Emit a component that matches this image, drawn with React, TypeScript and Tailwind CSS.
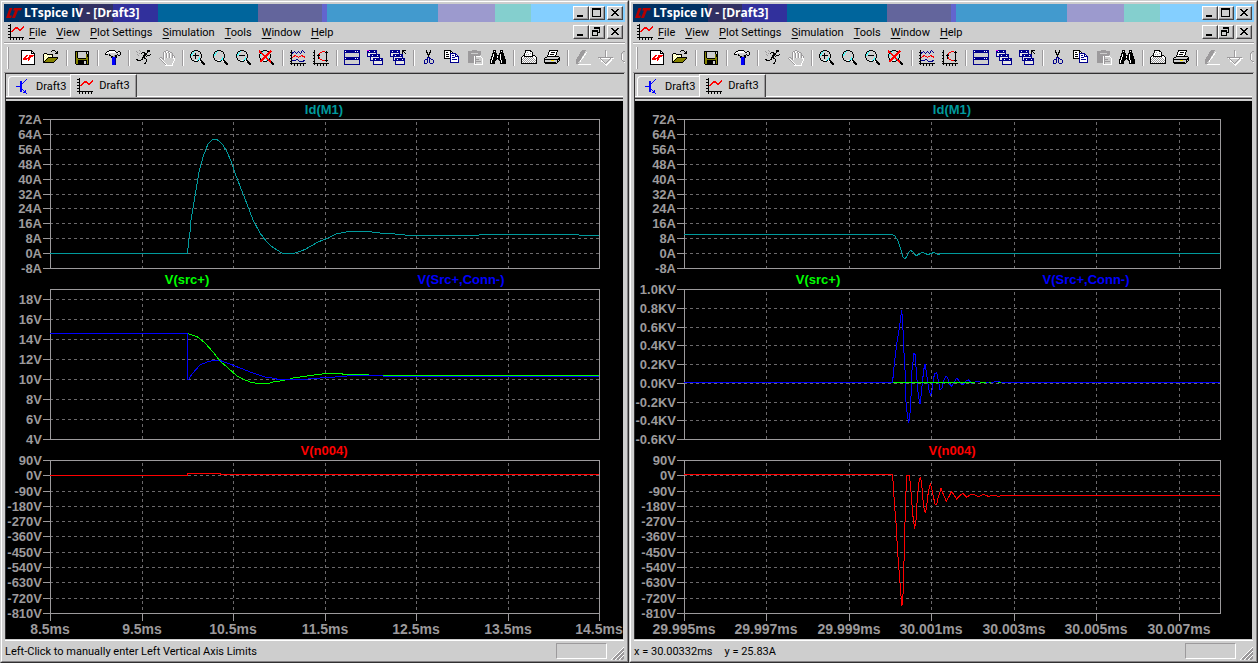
import type { ReactNode } from "react";

const UI = "font-['Roboto','Open_Sans',sans-serif]";

const AXIS = "#9c9a9c";
const GRID = "#6b696b";

/* ---------- icons ---------- */

function Icon({ children }: { children: ReactNode }) {
  return (
    <svg
      viewBox="0 0 16 16"
      className="block size-4 shrink-0"
      fill="none"
      stroke="#000"
      shapeRendering="crispEdges"
      aria-hidden="true"
    >
      {children}
    </svg>
  );
}

/* Draws a small glyph from character rows; each letter indexes a colour. */
const INK: Record<string, string> = {
  k: "#000000",
  w: "#ffffff",
  g: "#9c9a9c",
  s: "#cecece",
  b: "#0000ff",
  n: "#00008c",
  r: "#ff0000",
  o: "#848200",
  y: "#ffff9c",
  c: "#42ffff",
};

function Bitmap({ rows }: { rows: string[] }) {
  return (
    <Icon>
      <g stroke="none">
        {rows.flatMap((row, y) =>
          Array.from(row.matchAll(/([a-z])\1*/g)).map((run) => (
            <rect key={`${run.index}-${y}`} x={run.index} y={y} width={run[0].length} height="1" fill={INK[run[1]]} />
          )),
        )}
      </g>
    </Icon>
  );
}

const PlotIcon = () => (
  <Bitmap
    rows={[
      "..k.............",
      "kkk.............",
      "..k............r",
      "..k....rrr....rr",
      "kkk...rrrrr..rr.",
      "..k..rr...rrrr..",
      "..k.rr.....rr...",
      "kkkrr...........",
      "..k.............",
      "..k.............",
      "kkk.............",
      "..k.............",
      "..k.............",
      "kkkkkkkkkkkkkkkk",
      "..k..k..k..k..k.",
      "..k..k..k..k..k.",
    ]}
  />
);

const TransistorIcon = () => (
  <Bitmap
    rows={[
      "..........b.....",
      ".........b......",
      "....bb..b.......",
      "....bb.b........",
      "....bbb.........",
      "....bb..........",
      "....bb..........",
      "bbbbbb..........",
      "....bb..........",
      "....bb..........",
      "....bbb.........",
      "....bb.b.b......",
      "....bb..bb......",
      ".......bbb......",
      "..........b.....",
      "................",
    ]}
  />
);

const NewIcon = () => (
  <Bitmap
    rows={[
      ".kkkkkkkkkkk....",
      ".kwwwwwwwwwkk...",
      ".kwwwwwwwwwkwk..",
      ".kwwwwwwwwwkkkk.",
      ".kwwwwwwwwwwwwk.",
      ".kwwwwrrwrrrrrk.",
      ".kwwwrrwwrrrrwk.",
      ".kwwrrwwrrrwwwk.",
      ".kwrrrrrrrwwwwk.",
      ".kwrrrrwrrwwwwk.",
      ".kwwwwwwrwwwwwk.",
      ".kwwwwwwwwwwwwk.",
      ".kwwwwwwwwwwwwk.",
      ".kwwwwwwwwwwwwk.",
      ".kkkkkkkkkkkkkk.",
    ]}
  />
);

const OpenIcon = () => (
  <Bitmap
    rows={[
      ".........kkk....",
      "........k...k.k.",
      ".............kk.",
      ".kkk........kkk.",
      "kywykkkkkk......",
      "kwywywywyk......",
      "kywywywywk......",
      "kwywykkkkkkkkkk.",
      "kywykoooooooook.",
      "kwykoooooooook..",
      "kykoooooooook...",
      "kkoooooooook....",
      "kkkkkkkkkkk.....",
    ]}
  />
);

const SaveIcon = () => (
  <Bitmap
    rows={[
      "................",
      ".kkkkkkkkkkkkkk.",
      ".kokssssssssksk.",
      ".kokssssssssk.k.",
      ".kokssssssssokk.",
      ".kokssssssssokk.",
      ".kokssssssssokk.",
      ".kokssssssssook.",
      ".kookkkkkkkkook.",
      ".kooooooooooook.",
      ".kookkkkkkkkkok.",
      ".kookkkkkksskok.",
      ".kookkkkkksskok.",
      ".kookkkkkksskok.",
      "..kkkkkkkkkkkkk.",
    ]}
  />
);

const HammerIcon = () => (
  <Bitmap
    rows={[
      "....kkkkkk......",
      "..kkwwwwwwk..kk.",
      ".kwwwwwwwwwkkwsk",
      "kwwssssssssssssk",
      "kkk.kssssssskssk",
      "....kksssgkk.kk.",
      "......kkggkk....",
      "......kbbbnk....",
      ".......bbbn.....",
      ".......bbbn.....",
      ".......bbbn.....",
      ".......bbbn.....",
      ".......bbbn.....",
      ".......bbbn.....",
      ".......bbbn.....",
    ]}
  />
);

const RunIcon = () => (
  <Bitmap
    rows={[
      "...g.......kkk..",
      "g...g......kkk..",
      ".g....kkk..k....",
      "...g.k..kkk.....",
      ".g......kkk...k.",
      "..g....kkk.kkk..",
      ".......kk.k.....",
      "......kkk.......",
      "......k.kk......",
      "kk...kk...k.....",
      ".kkkk.....k.....",
      "..........k.....",
      ".........k......",
      "........kk......",
    ]}
  />
);

const HandIcon = () => (
  <Bitmap
    rows={[
      ".......gg.......",
      ".....ggwwgg.....",
      "....gwgwsgwgg...",
      "....gwsgwsgwsg..",
      "....gwsgwsgwsg..",
      "....gwsgwsgwsgg.",
      "....gwsgwsgwsgwg",
      ".gg.gwsgwsgwsgwg",
      "gwsggwssssssssww",
      ".gwsgwsssssssssw",
      "..gwsssssssssssw",
      "...gwsssssssssw.",
      "....gwssssssssw.",
      ".....gwssssssw..",
      "......gwsssssw..",
      "......wwwwwwww..",
    ]}
  />
);

function Lens({ children }: { children?: ReactNode }) {
  return (
    <Icon>
      <path d="M4 .5H8M2 1.5H4M8 1.5H10M1.5 2V4M10.5 2V4M.5 4V8M11.5 4V8M1.5 8V10M10.5 8V9M2 10.5H4M8 10.5H9M4 11.5H8" />
      <path stroke="#42ffff" d="M4 1.5H5M3 2.5H4M2.5 3V5M1.5 4V6M7 10.5H8M8 9.5H10M9.5 7V9" />
      <path strokeWidth="2" d="M10 10L15 15" />
      <path stroke="#fff" d="M9 10.5H10M10 11.5H11M5 10.5H7" />
      {children}
    </Icon>
  );
}

const ZoomInIcon = () => (
  <Lens>
    <path d="M3 5.5h6M5.5 3v6" />
  </Lens>
);
const ZoomAreaIcon = () => <Lens />;
const ZoomOutIcon = () => (
  <Lens>
    <path d="M3 5.5h6" />
  </Lens>
);
const ZoomFitIcon = () => (
  <Lens>
    <path stroke="#f00" strokeWidth="1.6" d="M0 1L12 12M12 1L1 12" />
  </Lens>
);

const TracesIcon = () => (
  <Icon>
    <path d="M1.5 0v15M0 2.5h2M0 5.5h2M0 8.5h2M0 11.5h2M0 13.5h16M4.5 13v3M7.5 13v3M10.5 13v3M13.5 13v3" />
    <path stroke="#00008c" d="M2 3.5L4.5 1.5L6.5 3.5L8.5 1.5L10.5 3.5L12.5 .5L15.5 3.5" />
    <path stroke="#f00" d="M2 7.5L5.5 5.5L8.5 7.5L11.5 5.5L15.5 7.5" />
    <path stroke="#00008c" d="M2 10.5H5L7 9.5L10 11.5H13L15.5 9.5" />
  </Icon>
);

const AutoRangeIcon = () => (
  <Icon>
    <path d="M1.5 0v15M0 2.5h2M0 5.5h2M0 8.5h2M0 11.5h2M0 13.5h16M4.5 13v3M7.5 13v3M10.5 13v3M13.5 13v3M13.5 1v11M12 2.5h3M12 10.5h3M5.5 4v5M4 5.5h3" />
    <path stroke="#f00" d="M6.5 5V3M7 2.5H9M9 1.5H12M6.5 7V9M7 9.5H9M9 10.5H12" />
  </Icon>
);

const TileIcon = () => (
  <Icon>
    <path stroke="none" fill="#00008c" d="M0 0h16v15H0z" />
    <path stroke="none" fill="#cecece" d="M1 3h14v4H1zM1 10h14v4H1z" />
    <path stroke="#fff" d="M1 1.5h1M11 1.5h1M13 1.5h1M1 8.5h1M11 8.5h1M13 8.5h1" />
  </Icon>
);

function MiniWindow({ x, y, w = 9 }: { x: number; y: number; w?: number }) {
  return (
    <g>
      <rect x={x} y={y} width={w} height="7" fill="#00008c" stroke="none" />
      <rect x={x + 1} y={y + 3} width={w - 2} height="3" fill="#e7e7e7" stroke="none" />
      <path stroke="#fff" d={`M${x + 2} ${y + 1.5}h1M${x + w - 3} ${y + 1.5}h1`} />
    </g>
  );
}

const CascadeIcon = () => (
  <Icon>
    <MiniWindow x={0} y={0} w={10} />
    <MiniWindow x={3} y={4} w={10} />
    <MiniWindow x={6} y={8} w={10} />
    <path stroke="#f0f" d="M0 .5h2" />
  </Icon>
);

const CloseAllIcon = () => (
  <Icon>
    <MiniWindow x={0} y={0} w={10} />
    <MiniWindow x={3} y={4} w={10} />
    <MiniWindow x={5} y={8} w={10} />
    <path d="M12.5 .5h3M12.5 .5v3M12.5 .5l3.5 3.5" />
  </Icon>
);

const CutIcon = () => (
  <Bitmap
    rows={[
      ".....k...k......",
      ".....k...k......",
      ".....kk.kk......",
      "......k.k.......",
      "......kkk.......",
      ".......k........",
      ".......k........",
      "......nnn.......",
      "......n.nn......",
      "....nnn.n.nn....",
      "...n..n.n...n...",
      "...n..n.n...n...",
      "...n..n.n...n...",
      "...nnn...nnn....",
    ]}
  />
);

const CopyIcon = () => (
  <Bitmap
    rows={[
      "kkkkkkk.........",
      "kwwwwwkk........",
      "kwkkwwkwk.......",
      "kwwwwwnnnnnn....",
      "kwkkkwnwwwwnn...",
      "kwwwwwnwnnwnwn..",
      "kwkkkwnwwwwnnnn.",
      "kwwwwwnwnnnwwwn.",
      "kkkkkknwwwwwwwn.",
      "......nwnnnnnwn.",
      "......nwwwwwwwn.",
      "......nwwwwwwwn.",
      "......nnnnnnnnn.",
    ]}
  />
);

const PasteIcon = () => (
  <Icon>
    <path fill="#9c9a9c" stroke="none" d="M1 1h4V0h5v1h4v4h-1v8H1z" />
    <path stroke="#cecece" d="M4 3.5h7" />
    <path fill="#cecece" stroke="#fff" d="M7.5 6.5H13.5L15.5 8.5V14.5H7.5Z" />
    <path stroke="#9c9a9c" d="M9 9.5h3M9 11.5h5M8.5 6v8" />
  </Icon>
);

const FindIcon = () => (
  <Bitmap
    rows={[
      "...kkk....kkk...",
      "...kwk....kwk...",
      "...kkk....kkk...",
      "..kkkkk..kkkkk..",
      "..kwkkk..kwkkk..",
      "..kwkkkkkkwkkk..",
      ".kkwkkkwkkwkkkk.",
      ".kwkkkkwkkwkkkk.",
      ".kwkkkkkkkwkkkk.",
      "kkwkkkk.kkwkkkkk",
      "kwkkkk...kkwkkkk",
      "kwkkk.....kwkkkk",
      "kwkkk.....kwkkkk",
      "kkkkk.....kkkkkk",
    ]}
  />
);

const PrintIcon = () => (
  <Bitmap
    rows={[
      "....kkkkkk......",
      "....kwwwwkk.....",
      "....kwgwwwwk....",
      "...kwwwwwgwk....",
      "...kwgwgwwwk....",
      "..kkwwwwwwwkkk..",
      ".kwkkkkkkkkkwwk.",
      "kwwgwgwgwgwgwwwk",
      "kwgwgwgwgwgwgwwk",
      "kgwgwgwgwgwgwgwk",
      "kwgwgwgwgwgwgwgk",
      "kgwgwgwgwgwgwgwk",
      "kwgwgwgwgwgwgwgk",
      "kkkkkkkkkkkkkkkk",
    ]}
  />
);

const PrintSetupIcon = () => (
  <Icon>
    <path fill="#fff" d="M3.5 6.5L5.5 .5H13.5L11.5 6.5" />
    <path d="M7 2.5h4M6 4.5h4" />
    <path fill="#cecece" d="M.5 8.5L3.5 6.5H14.5L15.5 7.5V10.5L12.5 13.5H2.5L.5 12.5Z" />
    <path d="M1 9.5h12M13.5 9v4M2 12.5h10M13 10.5l3-3" />
    <path stroke="#ffe700" d="M7 10.5h3" />
  </Icon>
);

const PencilIcon = () => (
  <Icon>
    <path stroke="#fff" d="M3 14.5h13M4.5 12.5L11.5 2.5" />
    <path fill="#9c9a9c" stroke="none" d="M1 14V10L7 0h4L5 11zM1 13h3v1H1z" />
  </Icon>
);

const GroundIcon = () => (
  <Icon>
    <path stroke="#fff" d="M8.5 1v7M1 8.5h15M3 10.5L8.5 15L14 9.5" />
    <path stroke="#9c9a9c" d="M7.5 0v7M0 7.5h15M2.5 8.5L7.5 13.5L12.5 8.5" />
  </Icon>
);

const LabelIcon = () => (
  <Icon>
    <path stroke="#9c9a9c" d="M12 1.5H2.5L.5 3.5V9.5L2.5 11.5H12" />
    <path stroke="#fff" d="M12 2.5H3.5M1.5 4v6M3 12.5h9" />
  </Icon>
);

const TOOL_GROUPS: { label: string; icon: () => ReactNode }[][] = [
  [
    { label: "New Schematic", icon: NewIcon },
    { label: "Open", icon: OpenIcon },
  ],
  [{ label: "Save", icon: SaveIcon }],
  [{ label: "Control Panel", icon: HammerIcon }],
  [
    { label: "Run", icon: RunIcon },
    { label: "Halt", icon: HandIcon },
  ],
  [
    { label: "Zoom In", icon: ZoomInIcon },
    { label: "Zoom Area", icon: ZoomAreaIcon },
    { label: "Zoom Out", icon: ZoomOutIcon },
    { label: "Zoom Full Extents", icon: ZoomFitIcon },
  ],
  [
    { label: "Pick Visible Traces", icon: TracesIcon },
    { label: "Autorange", icon: AutoRangeIcon },
  ],
  [
    { label: "Tile Windows", icon: TileIcon },
    { label: "Cascade Windows", icon: CascadeIcon },
    { label: "Close All Windows", icon: CloseAllIcon },
  ],
  [
    { label: "Cut", icon: CutIcon },
    { label: "Copy", icon: CopyIcon },
    { label: "Paste", icon: PasteIcon },
    { label: "Find", icon: FindIcon },
  ],
  [
    { label: "Print", icon: PrintIcon },
    { label: "Print Setup", icon: PrintSetupIcon },
  ],
  [
    { label: "Draw Wire", icon: PencilIcon },
    { label: "Ground", icon: GroundIcon },
    { label: "Label Net", icon: LabelIcon },
  ],
];

/* ---------- window chrome ---------- */

function CaptionButton({ label, path }: { label: string; path: string }) {
  return (
    <button
      type="button"
      aria-label={label}
      className="flex h-3.5 w-4 items-center justify-center border border-t-white border-r-[#424142] border-b-[#424142] border-l-white bg-[#cecece] shadow-[inset_-1px_-1px_#9c9a9c]"
    >
      <svg viewBox="0 0 14 12" className="block h-3 w-3.5" fill="none" stroke="#000" shapeRendering="crispEdges" aria-hidden="true">
        <path d={path} />
      </svg>
    </button>
  );
}

const MIN = "M3 8.5h6M3 9.5h6";
const MAX = "M2.5 1.5h8v8h-8zM3 2.5h7";
const RESTORE = "M4.5 3V1.5h5v5H8M5 2.5h4M2.5 4.5h5v5h-5zM3 5.5h4";
const CLOSE = "M3 2.5h2M9 2.5h2M4 3.5h2M8 3.5h2M5 4.5h4M6 5.5h2M5 6.5h4M4 7.5h2M8 7.5h2M3 8.5h2M9 8.5h2";

function CaptionButtons({ middle }: { middle: "Maximize" | "Restore" }) {
  return (
    <div className="ml-auto flex pr-0.5">
      <CaptionButton label="Minimize" path={MIN} />
      <CaptionButton label={middle} path={middle === "Maximize" ? MAX : RESTORE} />
      <div className="w-0.5" />
      <CaptionButton label="Close" path={CLOSE} />
    </div>
  );
}

function TitleBar() {
  return (
    <header className="grid h-[18px]">
      <div className="col-start-1 row-start-1 flex" aria-hidden="true">
        <div className="flex-[75] bg-[#003063]" />
        <div className="flex-[34] bg-[#313063]" />
        <div className="flex-[45] bg-[#31309c]" />
        <div className="flex-[100] bg-[#00659c]" />
        <div className="flex-[64] bg-[#63659c]" />
        <div className="flex-[5] bg-[#6365ce]" />
        <div className="flex-[111] bg-[#429ace]" />
        <div className="flex-[57] bg-[#9c9ace]" />
        <div className="flex-[36] bg-[#84cfce]" />
        <div className="flex-[94] bg-[#84cfff]" />
      </div>
      <div className="col-start-1 row-start-1 flex items-center">
        <svg viewBox="0 0 16 10" className="ml-0.5 block h-2.5 w-4" fill="#b50000" aria-hidden="true">
          <path d="M3.5 0H6.5L3.5 7.5H6L5 10H0ZM8 0H16L15 2.5H12L9 10H6L9 2.5H7Z" />
        </svg>
        <h1 className="ml-0.5 font-['Open_Sans','Noto_Sans',sans-serif] text-[12px] leading-4 font-bold whitespace-nowrap text-white">
          LTspice IV - [Draft3]
        </h1>
        <CaptionButtons middle="Maximize" />
      </div>
    </header>
  );
}

const MENUS = ["File", "View", "Plot Settings", "Simulation", "Tools", "Window", "Help"];

function MenuBar() {
  return (
    <nav className="flex h-5 items-center pl-1">
      <PlotIcon />
      <div className="ml-[5px] flex gap-2.5 pt-0.5">
        {MENUS.map((m) => (
          <button key={m} type="button" className="text-[11px] leading-4 whitespace-nowrap">
            <span className="underline underline-offset-2">{m[0]}</span>
            {m.slice(1)}
          </button>
        ))}
      </div>
      <CaptionButtons middle="Restore" />
    </nav>
  );
}

function Toolbar() {
  return (
    <div role="toolbar" className="flex h-7 items-center overflow-hidden pl-[3px]">
      <div className="mr-2 h-[22px] w-0.5 shrink-0 border-r border-l border-r-[#9c9a9c] border-l-white" />
      {TOOL_GROUPS.map((group, i) => (
        <div key={i} className="flex shrink-0 items-center">
          {i > 0 && (
            <div className="flex w-2 justify-center">
              <div className="h-4 w-0.5 border-r border-l border-r-white border-l-[#9c9a9c]" />
            </div>
          )}
          {group.map(({ label, icon: Glyph }) => (
            <button key={label} type="button" aria-label={label} className="w-[23px] pl-[3px]">
              <Glyph />
            </button>
          ))}
        </div>
      ))}
    </div>
  );
}

function Tabs() {
  return (
    <div className="flex h-[23px]">
      <div className="w-0.5 border-b border-white" />
      <div className="flex items-end border-b border-white">
        <button
          type="button"
          className="flex h-5 items-center gap-1 rounded-tl-sm border-t border-l border-white pr-1 pl-[7px] text-[11px] leading-4"
        >
          <TransistorIcon />
          <span className="pt-px">Draft3</span>
        </button>
      </div>
      <button
        type="button"
        aria-current="page"
        className="flex items-center gap-1.5 border-t border-r border-l border-t-white border-r-[#424142] border-l-white pr-1.5 pl-1.5 text-[11px] leading-4 shadow-[inset_-1px_0_#9c9a9c]"
      >
        <PlotIcon />
        Draft3
      </button>
      <div className="flex-1 border-b border-white" />
    </div>
  );
}

function StatusBar({ parts }: { parts: string[] }) {
  return (
    <footer className="flex h-5 items-center pl-px text-[11px] leading-4">
      <div className="flex gap-3 pt-px whitespace-nowrap">
        {parts.map((p) => (
          <span key={p}>{p}</span>
        ))}
      </div>
      <div className="ml-auto h-4 w-[51px] border border-t-[#9c9a9c] border-r-white border-b-white border-l-[#9c9a9c]" />
      <svg viewBox="0 0 13 13" className="mt-1 mr-px ml-1 block size-[13px]" fill="none" shapeRendering="crispEdges" aria-hidden="true">
        <path stroke="#9c9a9c" strokeWidth="1.5" d="M2 13L13 2M6 13L13 6M10 13L13 10" />
        <path stroke="#fff" d="M0 13L13 0M4 13L13 4M8 13L13 8" />
      </svg>
    </footer>
  );
}

/* ---------- plots ---------- */

type Tick = [number, string];
type Title = { x: number; text: string; color: string };
type Trace = { color: string; points: string; transform?: string };
type Panel = { top: number; bottom: number; ticks: Tick[]; titles: Title[]; traces: Trace[] };
type Plot = { originX: number; left: number; right: number; xTicks: Tick[]; panels: Panel[] };

function PlotView({ plot }: { plot: Plot }) {
  const { left, right, xTicks, panels } = plot;
  const inner = xTicks.filter(([x]) => x > left && x < right);
  return (
    <svg
      viewBox={`${plot.originX} 101 617 538`}
      className="block w-full bg-black font-['Liberation_Sans',Arial,sans-serif] font-bold"
      role="img"
      aria-label="Waveform plot"
    >
      {panels.map((p) => (
        <g key={p.top}>
          <g shapeRendering="crispEdges" fill="none">
            <g stroke={GRID} strokeDasharray="3 3">
              {p.ticks
                .filter(([y]) => y > p.top && y < p.bottom)
                .map(([y]) => (
                  <path key={y} d={`M${left} ${y + 0.5}H${right}`} />
                ))}
              {inner.map(([x]) => (
                <path key={x} d={`M${x + 0.5} ${p.top + 3}V${p.bottom}`} />
              ))}
            </g>
            <g stroke={AXIS}>
              <rect x={left + 0.5} y={p.top + 0.5} width={right - left} height={p.bottom - p.top} />
              {p.ticks.map(([y]) => (
                <path key={y} d={`M${left - 7} ${y + 0.5}H${left}`} />
              ))}
            </g>
            {p.traces.map((t, i) => (
              <polyline key={i} points={t.points} transform={t.transform} stroke={t.color} vectorEffect="non-scaling-stroke" />
            ))}
          </g>
          <g fill={AXIS} fontSize="13" textAnchor="end">
            {p.ticks.map(([y, label]) => (
              <text key={label} x={left - 8} y={y + 5}>
                {label}
              </text>
            ))}
          </g>
          <g fontSize="13" textAnchor="middle">
            {p.titles.map((t) => (
              <text key={t.text} x={t.x} y={p.top - 5} fill={t.color}>
                {t.text}
              </text>
            ))}
          </g>
        </g>
      ))}
      <g stroke={AXIS} shapeRendering="crispEdges">
        {xTicks.map(([x]) => (
          <path key={x} d={`M${x + 0.5} 613V621`} />
        ))}
      </g>
      <g fill={AXIS} fontSize="14" textAnchor="middle">
        {xTicks.map(([x, label]) => (
          <text key={x} x={x} y="634">
            {label}
          </text>
        ))}
      </g>
    </svg>
  );
}

const AMP_TICKS: Tick[] = [
  [119, "72A"], [134, "64A"], [149, "56A"], [164, "48A"], [179, "40A"], [194, "32A"],
  [208, "24A"], [223, "16A"], [238, "8A"], [253, "0A"], [268, "-8A"],
];

const DRAIN_TICKS: Tick[] = [
  [460, "90V"], [475, "0V"], [491, "-90V"], [506, "-180V"], [521, "-270V"], [536, "-360V"],
  [552, "-450V"], [567, "-540V"], [582, "-630V"], [598, "-720V"], [613, "-810V"],
];

const TEAL = "#009a9c";
const GREEN = "#00ff00";
const BLUE = "#0000ff";
const RED = "#ff0000";

const turnOn: Plot = {
  originX: 6,
  left: 50,
  right: 599,
  xTicks: [
    [50, "8.5ms"], [142, "9.5ms"], [233, "10.5ms"], [325, "11.5ms"],
    [416, "12.5ms"], [508, "13.5ms"], [599, "14.5ms"],
  ],
  panels: [
    {
      top: 119,
      bottom: 268,
      ticks: AMP_TICKS,
      titles: [{ x: 324, text: "Id(M1)", color: TEAL }],
      traces: [
        {
          color: TEAL,
          points:
            "50,253.5 187.5,253.5 188.5,243 190,232 191,220 193,208 196,190 199,172 203,157 206,149 208,144 212,140 214,139.5 217,139.5 219,141 223,145 227,152 231,161 235,173 240,186 247,204 253,220 260,233 266,241 271,246 277,250 282,253 294,253.5 305,249.5 318,242 328,238 336,234 346,232 356,231.5 368,231.5 380,233 395,234 410,235.5 478,235.5 480,234.5 578,234.5 580,235.5 599,235.5",
        },
      ],
    },
    {
      top: 289,
      bottom: 439,
      ticks: [[299, "18V"], [319, "16V"], [339, "14V"], [359, "12V"], [379, "10V"], [399, "8V"], [419, "6V"], [439, "4V"]],
      titles: [
        { x: 187, text: "V(src+)", color: GREEN },
        { x: 461, text: "V(Src+,Conn-)", color: BLUE },
      ],
      traces: [
        {
          color: BLUE,
          points:
            "50,333.5 187.5,333.5 187.5,379.5 189,379 192,374 200,365 207,362 213,360.5 220,360.5 230,364 240,368 253,373 265,377 275,378.5 278,379.5 302,379.5 315,378.5 326,377.5 345,376.5 350,375.5 383,375.5 383,376.5 599,376.5",
        },
        {
          color: GREEN,
          points:
            "188,333.5 192,335 197,336.5 205,343 213,352 220,361 228,368 237,376 243,379 250,382 257,383.5 268,383.5 275,381.5 285,380.5",
        },
        { color: GREEN, points: "290,378.5 293,378 307,376 317,374.5 328,373.5 342,373.5 343,374.5 369,374.5" },
        { color: GREEN, points: "383,375.5 599,375.5" },
      ],
    },
    {
      top: 460,
      bottom: 613,
      ticks: DRAIN_TICKS,
      titles: [{ x: 324, text: "V(n004)", color: RED }],
      traces: [{ color: RED, points: "50,475.5 187.5,475.5 187.5,473.5 220,473.5 220,474.5 599,474.5" }],
    },
  ],
};

const turnOff: Plot = {
  originX: 635,
  left: 684,
  right: 1220,
  xTicks: [
    [684, "29.995ms"], [766, "29.997ms"], [849, "29.999ms"], [931, "30.001ms"],
    [1014, "30.003ms"], [1096, "30.005ms"], [1179, "30.007ms"],
  ],
  panels: [
    {
      top: 119,
      bottom: 268,
      ticks: AMP_TICKS,
      titles: [{ x: 952, text: "Id(M1)", color: TEAL }],
      traces: [
        {
          color: TEAL,
          points:
            "684,234.5 892,234.5 895,236 898,241 901,250 903,257 905,259 907,256 909,252 911,250.5 913,252 916,255.5 919,254.5 922,252 925,253.5 928,254.5 931,253.5 934,252.5 938,254.5 941,253.5 1220,253.5",
        },
      ],
    },
    {
      top: 289,
      bottom: 439,
      ticks: [
        [289, "1.0KV"], [308, "0.8KV"], [327, "0.6KV"], [345, "0.4KV"], [364, "0.2KV"],
        [383, "0.0KV"], [402, "-0.2KV"], [420, "-0.4KV"], [439, "-0.6KV"],
      ],
      titles: [
        { x: 818, text: "V(src+)", color: GREEN },
        { x: 1086, text: "V(Src+,Conn-)", color: BLUE },
      ],
      traces: [
        {
          color: BLUE,
          transform: "translate(860 220) scale(0.33333)",
          points:
            "-528,487 98,487 100,460 106,405 112,360 118,325 125,270 128,305 131,380 135,450 138,545 142,585 146,610 150,580 153,530 156,450 159,425 162,400 165,403 168,440 171,480 174,515 178,545 181,553 184,515 188,480 191,450 195,433 199,455 202,480 208,515 212,525 217,508 220,480 224,460 230,458 235,480 240,508 246,505 252,480 258,469 263,472 268,490 274,500 281,488 290,475 296,480 303,493 310,493 317,483 325,480 335,489 345,486 355,484 370,489 382,486 395,487 415,484 425,488 448,487 1080,487",
        },
        { color: GREEN, points: "893,382.5 975,382.5" },
        { color: GREEN, points: "980,382.5 986,382.5" },
        { color: GREEN, points: "989,382.5 991,382.5" },
        { color: GREEN, points: "998,382.5 1001,382.5" },
      ],
    },
    {
      top: 460,
      bottom: 613,
      ticks: DRAIN_TICKS,
      titles: [{ x: 952, text: "V(n004)", color: RED }],
      traces: [
        {
          color: RED,
          transform: "translate(860 440) scale(0.33333)",
          points:
            "-528,103 96,103 100,130 103,190 109,260 112,325 118,402 121,440 125,497 128,490 131,410 134,280 137,180 140,106 148,106 151,130 156,195 160,240 164,266 168,240 171,190 176,130 181,112 185,130 189,180 193,212 197,217 201,190 205,155 211,133 215,145 220,170 226,195 230,195 234,175 243,145 248,158 259,184 264,175 275,154 282,165 290,177 298,168 308,160 320,172 330,165 342,163 355,170 370,163 385,169 400,166 417,169 425,166 1080,166",
        },
      ],
    },
  ],
};

function AppWindow({ plot, status }: { plot: Plot; status: string[] }) {
  return (
    <section className="border border-t-[#cecece] border-r-[#313031] border-b-[#313031] border-l-[#cecece]">
      <div className="border border-t-white border-r-[#848284] border-b-[#848284] border-l-white px-0.5 pt-0.5">
        <TitleBar />
        <MenuBar />
        <div className="h-0.5 border-t border-b border-t-[#9c9a9c] border-b-white" />
        <Toolbar />
        <main className="border-t border-[#9c9a9c] pr-px pl-px">
          <div className="border-t border-l border-[#313031] pr-px">
            <Tabs />
            <div className="h-0.5 border-t border-b border-t-[#9c9a9c] border-b-[#313031]" />
            <div className="h-0.5" />
            <PlotView plot={plot} />
          </div>
          <div className="h-0.5 border-b border-white" />
        </main>
        <StatusBar parts={status} />
      </div>
    </section>
  );
}

export default function App() {
  return (
    <div className={`grid grid-cols-2 bg-[#cecece] text-black ${UI}`}>
      <AppWindow plot={turnOn} status={["Left-Click to manually enter Left Vertical Axis Limits"]} />
      <AppWindow plot={turnOff} status={["x = 30.00332ms", "y = 25.83A"]} />
    </div>
  );
}
